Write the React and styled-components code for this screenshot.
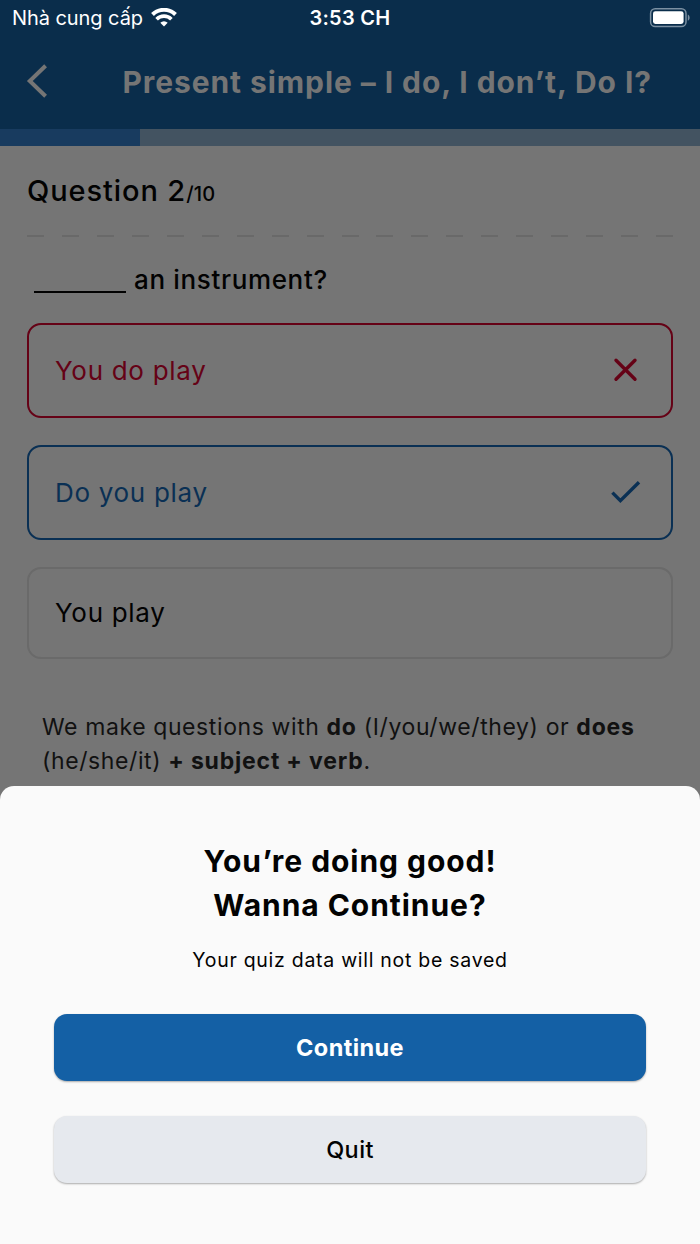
import React from 'react';
import styled, { createGlobalStyle } from 'styled-components';

const GlobalStyle = createGlobalStyle`
  * {
    box-sizing: border-box;
  }

  body {
    margin: 0;
    background: #757575;
    font-family: Inter, Roboto, "Liberation Sans", sans-serif;
  }
`;

const Screen = styled.div`
  position: relative;
  width: 700px;
  height: 1244px;
  overflow: hidden;
  background: #757575;
  color: #020202;
`;

const StatusBar = styled.div`
  height: 36px;
  padding: 0 9px;
  display: grid;
  grid-template-columns: 1fr auto 1fr;
  align-items: center;
  background: #0a2d4b;
  color: white;
  font-size: 20px;
`;

const Carrier = styled.div`
  padding-left: 3px;
  display: flex;
  align-items: center;
  gap: 8px;
  letter-spacing: -0.07px;
`;

const Clock = styled.div`
  font-weight: 600;
  font-size: 20px;
  letter-spacing: 0.3px;
`;

const Battery = styled.svg`
  justify-self: end;
`;

const Header = styled.header`
  height: 92.5px;
  padding: 0 48px 0 26px;
  display: flex;
  align-items: center;
  justify-content: space-between;
  background: #0a2d4b;
  color: #757575;
`;

const BackButton = styled.button`
  display: flex;
  padding: 0 0 2px;
  border: none;
  background: none;
  color: inherit;
`;

const HeaderTitle = styled.h1`
  margin: 0;
  font-size: 30px;
  line-height: 36px;
  font-weight: 700;
  letter-spacing: 0.92px;
  white-space: nowrap;
`;

const Progress = styled.div`
  height: 17px;
  background: #435361;
`;

const ProgressFill = styled.div`
  height: 100%;
  background: #183b5f;
`;

const Content = styled.main`
  padding: 0 27px;
`;

const Counter = styled.div`
  height: 89px;
  padding-top: 28px;
  font-size: 29px;
  line-height: 34px;
  font-weight: 500;
  letter-spacing: 0.9px;
  white-space: nowrap;

  small {
    font-size: 20px;
    letter-spacing: 0.2px;
  }
`;

const Divider = styled.div`
  height: 2px;
  background: repeating-linear-gradient(90deg, #696969 0 17px, transparent 17px 34.95px);
`;

const Prompt = styled.div`
  height: 86.5px;
  padding: 26px 0 0 7px;
  display: flex;
  gap: 8px;
  font-size: 26px;
  line-height: 34px;
  font-weight: 500;
  letter-spacing: 0.65px;
`;

const Blank = styled.span`
  width: 92px;
  height: 30px;
  border-bottom: 2px solid #020202;
`;

const Answers = styled.div`
  display: flex;
  flex-direction: column;
  gap: 27px;
`;

const Answer = styled.div`
  height: ${(props) => (props.$plain ? 92.5 : 94.8)}px;
  padding: 0 30px 0 26px;
  display: flex;
  align-items: center;
  justify-content: space-between;
  border: 2px solid ${(props) => props.$border};
  border-radius: 14px;
  color: ${(props) => props.$color};
  font-size: 26px;
  letter-spacing: 0.7px;
`;

const Explanation = styled.p`
  margin: 51px 0 0;
  padding: 0 15px;
  color: #111;
  font-size: 23px;
  line-height: 34px;
  letter-spacing: 0.6px;
  white-space: nowrap;

  b {
    letter-spacing: 0.8px;
  }
`;

const Sheet = styled.section`
  position: absolute;
  left: 0;
  right: 0;
  bottom: 0;
  height: 458px;
  padding: 53px 54px 0;
  display: flex;
  flex-direction: column;
  background: #fafafa;
  border-radius: 14px 14px 0 0;
  text-align: center;
`;

const SheetTitle = styled.h2`
  margin: 0;
  font-size: 30px;
  line-height: 44px;
  font-weight: 700;
  letter-spacing: 0.95px;
`;

const SheetText = styled.p`
  margin: 21px 0 41px;
  font-size: 19.5px;
  line-height: 25px;
  letter-spacing: 0.72px;
`;

const Button = styled.button`
  height: 67px;
  margin-bottom: 35px;
  padding: 0;
  border: none;
  border-radius: 13px;
  background: ${(props) => (props.$primary ? '#1460a5' : '#e6e9ee')};
  color: ${(props) => (props.$primary ? 'white' : '#020202')};
  box-shadow: 0 1px 2px rgba(0, 0, 0, 0.32);
  font-family: inherit;
  font-size: 23.5px;
  font-weight: ${(props) => (props.$primary ? 700 : 500)};
  letter-spacing: 0.4px;
`;

const WifiIcon = () => (
  <svg width="26" height="20" viewBox="0 0 26 20" fill="none" stroke="white">
    <path d="M1.5 6.5a16.4 16.4 0 0 1 23 0" strokeWidth="4" />
    <path d="M5.6 11.2a10.6 10.6 0 0 1 14.8 0" strokeWidth="3.7" />
    <path d="M13 18.4l-3.7-3.7a5.3 5.3 0 0 1 7.4 0z" fill="white" stroke="none" />
  </svg>
);

const BatteryIcon = () => (
  <Battery width="42" height="20" viewBox="0 0 42 20">
    <rect x="1.6" y="0.8" width="35.4" height="17.8" rx="4.6" fill="none" stroke="#7b90a2" strokeWidth="1.5" />
    <rect x="4" y="3.2" width="30.6" height="12.8" rx="2.4" fill="white" />
    <path d="M38.8 6.4c2.4 1.2 2.4 5.2 0 6.4z" fill="#7b90a2" />
  </Battery>
);

const BackIcon = () => (
  <svg width="22" height="34" viewBox="0 0 22 34" fill="none" stroke="currentColor" strokeWidth="4">
    <path d="M19.6 1.8L3.8 17l15.8 15.2" />
  </svg>
);

const CrossIcon = () => (
  <svg width="30" height="30" viewBox="0 0 30 30" stroke="#650216" strokeWidth="3.4" strokeLinecap="round">
    <path d="M5 5.2l19 19M24 5.2l-19 19" />
  </svg>
);

const CheckIcon = () => (
  <svg width="30" height="30" viewBox="0 0 30 30" fill="none" stroke="#0a3054" strokeWidth="3.4">
    <path d="M1.4 15.6l8 8L28 5.2" />
  </svg>
);

const App = () => {
  return (
    <Screen>
      <GlobalStyle />
      <StatusBar>
        <Carrier>
          <span>Nhà cung cấp</span>
          <WifiIcon />
        </Carrier>
        <Clock>3:53 CH</Clock>
        <BatteryIcon />
      </StatusBar>
      <Header>
        <BackButton aria-label="Back"><BackIcon /></BackButton>
        <HeaderTitle>Present simple – I do, I don’t, Do I?</HeaderTitle>
      </Header>
      <Progress>
        <ProgressFill style={{ width: `${(2 / 10) * 100}%` }} />
      </Progress>

      <Content>
        <Counter>Question 2<small>/10</small></Counter>
        <Divider />
        <Prompt>
          <Blank />
          <span>an instrument?</span>
        </Prompt>
        <Answers>
          <Answer $border="#650216" $color="#650216">
            You do play
            <CrossIcon />
          </Answer>
          <Answer $border="#0a3054" $color="#0a3054">
            Do you play
            <CheckIcon />
          </Answer>
          <Answer $plain $border="#6a6a6a" $color="#020202">You play</Answer>
        </Answers>
        <Explanation>
          We make questions with <b>do</b> (I/you/we/they) or <b>does</b>
          <br />
          (he/she/it) <b>+ subject + verb</b>.
        </Explanation>
      </Content>

      <Sheet>
        <SheetTitle>
          You’re doing good!
          <br />
          Wanna Continue?
        </SheetTitle>
        <SheetText>Your quiz data will not be saved</SheetText>
        <Button $primary>Continue</Button>
        <Button>Quit</Button>
      </Sheet>
    </Screen>
  );
};

export default App;
